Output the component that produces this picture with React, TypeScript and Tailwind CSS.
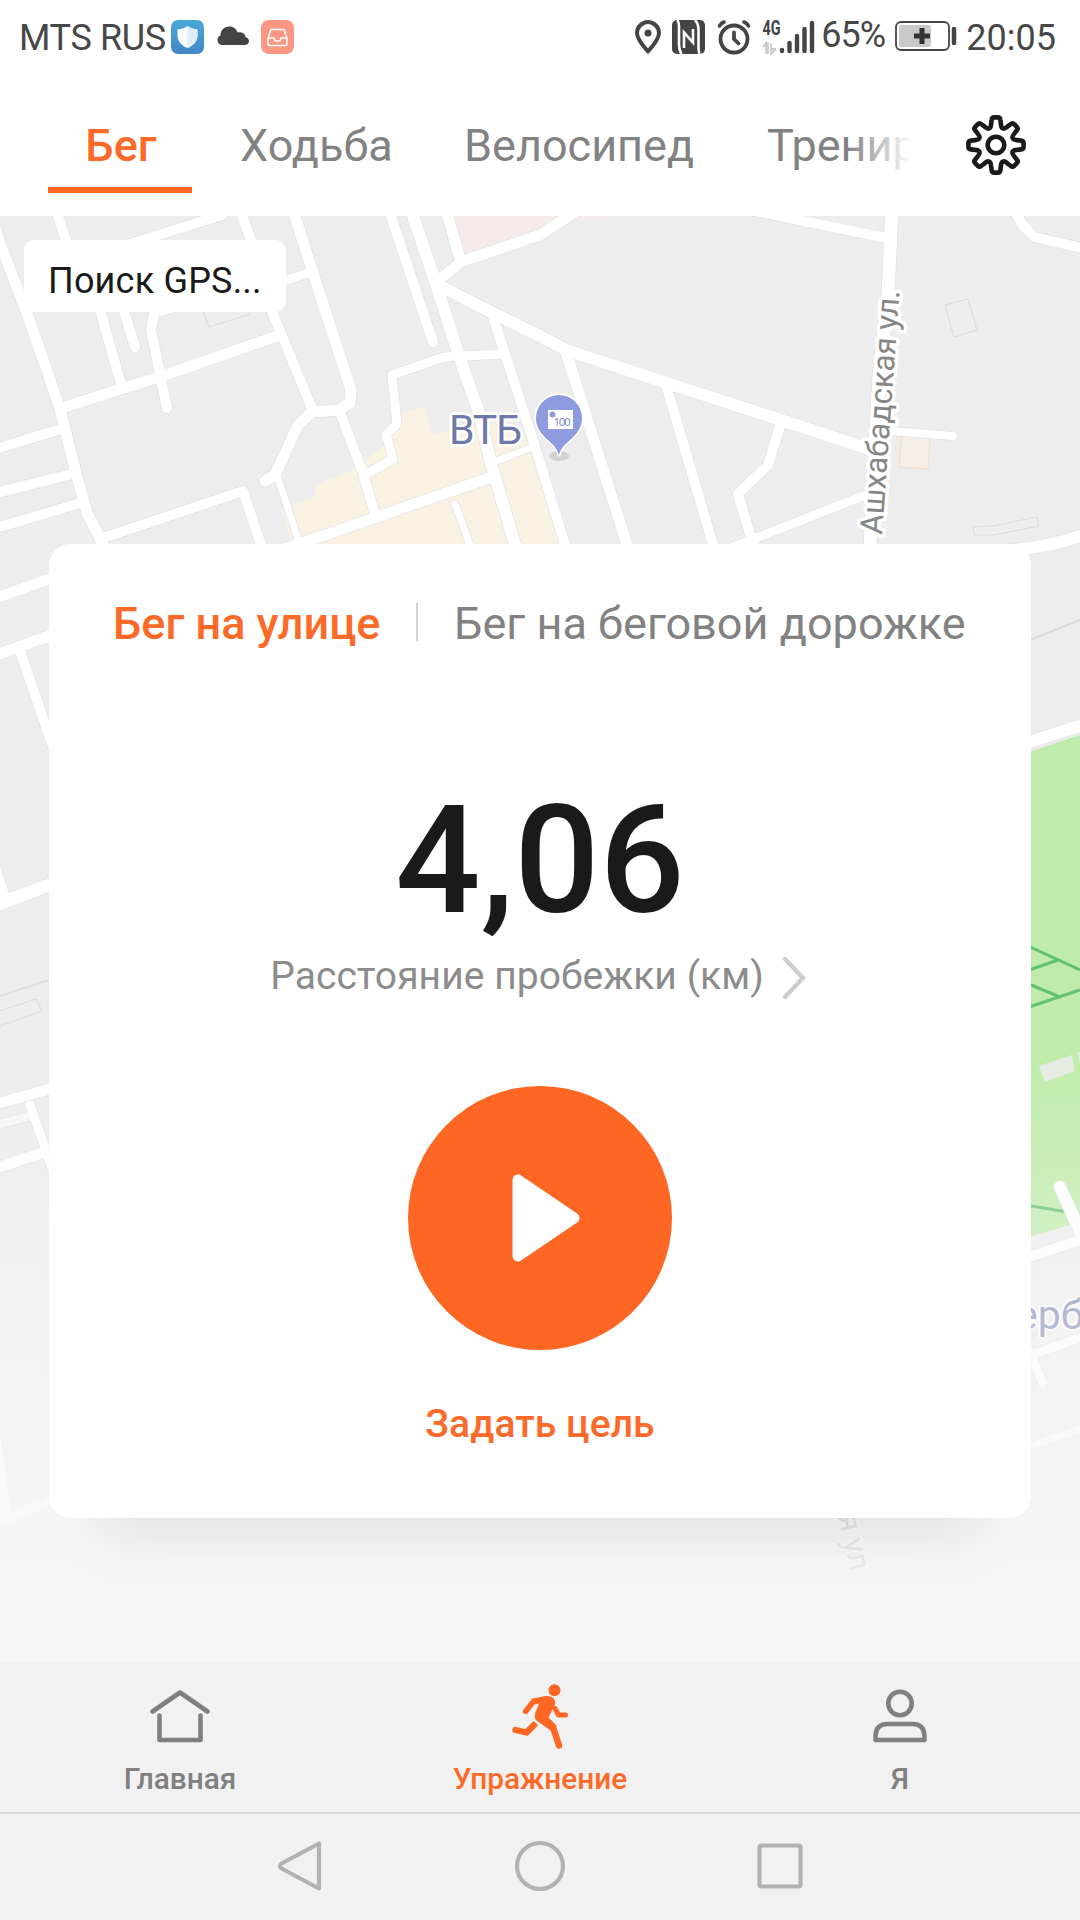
import { useState } from "react";

type Road = { d: string; w: number; color?: string };

const ROADS: Road[] = [
  { d: "M-10 212L0 243L28 316L60 409L76 473L87 513L105 548", w: 11 },
  { d: "M56 210L75 268L100 310L121 384", w: 10 },
  { d: "M108 270L124 311L135 347", w: 10 },
  { d: "M130 244L222 215", w: 10 },
  { d: "M240 210L251 240L272 312L281 333L312 409", w: 10 },
  { d: "M293 210L313 273L351 390L350 403L339 410L312 412L298 425L275 475L265 481", w: 11 },
  { d: "M284 281L311 272", w: 9 },
  { d: "M62 408L127 387L165 375L277 336", w: 11 },
  { d: "M180 305L154 313L151 330L167 408", w: 10 },
  { d: "M339 410L363 473L376 518", w: 10 },
  { d: "M365 475L393 459L386 435L397 424L392 375L444 357L505 354", w: 9 },
  { d: "M389 210L433 342", w: 10 },
  { d: "M411 210L437 287L458 353L478 410L492 467L516 548", w: 12 },
  { d: "M446 210L460 259", w: 11 },
  { d: "M437 281L463 261L540 235L578 210", w: 11 },
  { d: "M440 286L495 314L540 336L566 350L667 383L781 420L872 450", w: 12 },
  { d: "M494 320L534 443L566 548", w: 10 },
  { d: "M-4 449L64 428", w: 10 },
  { d: "M-4 493L76 473", w: 10 },
  { d: "M-4 528L84 502", w: 10 },
  { d: "M103 538L243 491L262 548", w: 10 },
  { d: "M277 475L301 548", w: 7 },
  { d: "M285 549L489 478", w: 11 },
  { d: "M494 462L530 448", w: 7 },
  { d: "M455 504L472 550", w: 7 },
  { d: "M566 352L628 548", w: 11 },
  { d: "M666 385L714 548", w: 10 },
  { d: "M781 423L768 465L738 494L754 548", w: 10 },
  { d: "M728 549L871 493", w: 9 },
  { d: "M892 210L888 293L879 377L870 548", w: 13 },
  { d: "M755 211L886 238", w: 10 },
  { d: "M892 431L953 436", w: 8 },
  { d: "M1014 210L1022 224L1034 237L1086 249", w: 10 },
  { d: "M1000 551Q1050 548 1086 534", w: 12 },
  { d: "M-4 598L60 575", w: 11 },
  { d: "M-4 655L60 632", w: 11 },
  { d: "M19 648L54 750", w: 10 },
  { d: "M-6 864L5 897", w: 10 },
  { d: "M-4 905L60 881", w: 13 },
  { d: "M-4 1104L60 1086", w: 11 },
  { d: "M-4 1125L30 1116", w: 9, color: "#f7f7f7" },
  { d: "M-4 1168L60 1147", w: 11 },
  { d: "M30 1105L52 1168", w: 9 },
  { d: "M1026 743L1086 724", w: 12 },
  { d: "M1026 1258L1086 1238", w: 10 },
  { d: "M1060 1187L1084 1240", w: 12 },
  { d: "M1026 1357L1086 1336", w: 9 },
  { d: "M1030 1352L1043 1384", w: 9 },
  { d: "M1026 1448L1086 1427", w: 8 },
  { d: "M-4 1440L6 1510L-4 1524L60 1496", w: 10 },
];

// one gear tooth plus the valley to its right, repeated every 45 degrees
function gearPath() {
  const rot = (x: number, y: number, a: number) => {
    const s = Math.sin(a);
    const c = Math.cos(a);
    return `${(30 + x * c - y * s).toFixed(2)} ${(30 + x * s + y * c).toFixed(2)}`;
  };
  let d = "";
  for (let i = 0; i < 8; i++) {
    const a = (i * Math.PI) / 4;
    const p = (x: number, y: number) => rot(x, y, a);
    d += `${i === 0 ? "M" : "L"}${p(-4.9, -21)}L${p(-4.4, -25)}Q${p(-4.2, -27.6)} ${p(-1.8, -27.6)}`;
    d += `L${p(1.8, -27.6)}Q${p(4.2, -27.6)} ${p(4.4, -25)}L${p(4.9, -21)}`;
    d += `C${p(5.3, -16)} ${p(7.57, -15.06)} ${p(11.38, -18.31)}`;
  }
  return d + "Z";
}

const GEAR = gearPath();

function MapView() {
  return (
    <svg className="absolute inset-0 h-full w-full" viewBox="0 216 1080 1446" aria-hidden="true">
      <defs>
        <linearGradient id="fade" x1="0" y1="0" x2="0" y2="1">
          <stop offset="0.58" stopColor="#f7f7f7" stopOpacity="0" />
          <stop offset="0.93" stopColor="#f7f7f7" stopOpacity="0.9" />
          <stop offset="1" stopColor="#f7f7f7" />
        </linearGradient>
      </defs>
      <rect y="216" width="1080" height="1446" fill="#ededed" />

      <path d="M455 216H619L565 222L463 252Z" fill="#f7eaea" />
      <path
        d="M283 510L296 503L315 497V485L353 470L390 440L401 413L424 407L433 435L458 427L492 424L530 432L566 548H293Z"
        fill="#f9f2e3"
      />
      <path d="M902 433L930 435L928 469L899 467Z" fill="#f4efea" stroke="#f3dfc8" />
      <g fill="none" stroke="#dadada">
        <path d="M945 305L968 299L977 330L954 337Z" />
        <path d="M973 527L993 526L1037 517L1039 526L994 535H974Z" />
        <path d="M0 1011L36 999L42 1011L0 1026" />
        <path d="M202 308L209 327L250 314" />
      </g>
      <path d="M0 996L49 980" stroke="#dedede" strokeWidth="2" />
      <path d="M1030 640L1080 620" stroke="#d5dadb" strokeWidth="2" />

      <path d="M1026 753L1080 735V1222L1026 1238Z" fill="#bfecaa" />
      <g fill="none" stroke="#63c074" strokeWidth="3">
        <path d="M1026 945L1080 970M1026 971L1058 960M1026 983L1058 996M1026 1008L1080 990M1026 1205L1067 1212" />
      </g>
      <path d="M1039 1066L1072 1055L1075 1071L1045 1082ZM1077 1053L1080 1052V1062Z" fill="#e4ebe2" />

      <g fill="none" strokeLinecap="round" strokeLinejoin="round">
        {ROADS.map((r) => (
          <path key={r.d} d={r.d} stroke="#e1e1e1" strokeWidth={r.w + 1.4} />
        ))}
        {ROADS.map((r) => (
          <path key={r.d} d={r.d} stroke={r.color ?? "#fff"} strokeWidth={r.w} />
        ))}
      </g>

      <g className="font-['Roboto',sans-serif]" stroke="#fff" strokeLinejoin="round" paintOrder="stroke">
        <text x="449" y="444" fontSize="41" textLength="73" strokeWidth="5" fill="#6f79a8">
          ВТБ
        </text>
        <text
          transform="translate(882 535) rotate(-85.9)"
          fontSize="31.5"
          textLength="245"
          strokeWidth="7"
          fill="#868686"
        >
          Ашхабадская ул.
        </text>
        <text x="1016" y="1329" fontSize="41" strokeWidth="4" fill="#7c82b4">
          ерб
        </text>
        <text transform="translate(834 1500) rotate(77)" fontSize="31" strokeWidth="4" fill="#777">
          ая ул
        </text>
      </g>

      <ellipse cx="559" cy="456" rx="10" ry="5" fill="#d2d2d2" />
      <path
        d="M559 456C557 441 536 438 536 418A23 23 0 0 1 582 418C582 438 561 441 559 456Z"
        fill="#8f9bdf"
        stroke="#fff"
        strokeWidth="3"
        paintOrder="stroke"
      />
      <rect x="548" y="410" width="25" height="19" fill="#fff" />
      <circle cx="552.5" cy="414.5" r="3" fill="#8f9bdf" />
      <text x="553.5" y="426" fontSize="11.5" textLength="17" className="font-['Open_Sans',sans-serif]" fill="#6f7dcc">
        100
      </text>
      <rect y="216" width="1080" height="1446" fill="url(#fade)" />
    </svg>
  );
}

function StatusBar() {
  return (
    <div className="flex h-[74px] items-center pl-[19px] pr-[24px] text-[36px] leading-none text-[#474747]">
      <span className="w-[152px] whitespace-nowrap pt-[2px] tracking-[-0.35px]">MTS RUS</span>
      <svg width="33" height="34" viewBox="0 0 33 34">
        <defs>
          <linearGradient id="shield" x1="0" y1="0" x2="0" y2="1">
            <stop offset="0" stopColor="#4aa8da" />
            <stop offset="1" stopColor="#4286c4" />
          </linearGradient>
        </defs>
        <rect width="33" height="34" rx="7" fill="url(#shield)" />
        <path d="M16.500 6C19 8 22 9 26.500 9.500V15C26.500 21 23 25.500 16.500 28C10 25.500 6.500 21 6.500 15V9.500C11 9 14 8 16.500 6Z" fill="#fafdff" />
        <path d="M16.500 6C19 8 22 9 26.500 9.500V15C26.500 21 23 25.500 16.500 28Z" fill="#dfecf7" />
      </svg>
      <svg className="ml-3" width="33" height="34" viewBox="0 0 33 34">
        <path d="M5.500 25A5 5 0 0 1 4.500 15.500C4.500 10 8 6.500 13.500 6.500C17.500 6.500 20.500 9 21.500 12.500C26 11.500 29.500 14 29.500 17C32 17.500 33 19.500 33 21C33 23.500 31 25 28.500 25Z" fill="#444" />
      </svg>
      <svg className="ml-3" width="33" height="34" viewBox="0 0 33 34">
        <rect width="33" height="34" rx="8" fill="#fd9682" />
        <g fill="none" stroke="#fff" strokeWidth="1.500" strokeLinejoin="round">
          <path d="M10 9.500H23L26 18V23.500Q26 25.500 24 25.500H9Q7 25.500 7 23.500V18Z" />
          <path d="M7.500 18H13L14 21H19L20 18H25.500" />
        </g>
      </svg>

      <svg className="ml-auto" width="28" height="36" viewBox="0 0 28 36">
        <path d="M14 32.500C10 27.500 3 21 3 14A11 11 0 0 1 25 14C25 21 18 27.500 14 32.500Z" fill="none" stroke="#444" strokeWidth="4" strokeLinejoin="round" />
        <circle cx="14" cy="14" r="3.500" fill="#444" />
      </svg>
      <svg className="ml-[10px]" width="33" height="34" viewBox="0 0 33 34">
        <rect width="33" height="34" rx="5" fill="#444" />
        <g fill="none" stroke="#fff">
          <path d="M5 0C7.500 2 7 6 7 9V24C7 28 7.500 31 9.500 34" strokeWidth="2.600" />
          <path d="M23 0C26 3 26.500 6 26.500 10V25C26.500 29 26.500 32 27.500 34" strokeWidth="2.600" />
          <path d="M12 28V12.500L21 22.500V9" strokeWidth="2.600" />
        </g>
      </svg>
      <svg className="ml-3" width="34" height="36" viewBox="0 0 34 36">
        <g fill="none" stroke="#444" strokeLinecap="round">
          <circle cx="17" cy="20" r="13.500" strokeWidth="3.800" />
          <path d="M17 13.500V20L21.500 24.500" strokeWidth="3.800" />
          <path d="M2.500 7Q4 4 7 3M31.500 7Q30 4 27 3" strokeWidth="3.600" />
        </g>
      </svg>
      <svg className="ml-[9px] overflow-visible" width="56" height="38" viewBox="-2 -1 56 38">
        <text x="0.500" y="16" fontSize="20" fontWeight="700" textLength="18" lengthAdjust="spacingAndGlyphs" fill="#444">
          4G
        </text>
        <path d="M1 28L4 24V35M4 24H6V35M9 24V35L14 30M9 30H14" fill="none" stroke="#c9c9c9" strokeWidth="1.800" />
        <g stroke="#444" strokeWidth="4.400" strokeLinecap="round">
          <path d="M20 31V32M27.500 24V32M35 17V32M42.500 10V32M50 4V32" />
        </g>
      </svg>
      <span className="ml-[5px] w-[68px] whitespace-nowrap pb-1 tracking-[-1px]">65%</span>
      <svg className="ml-[6px]" width="62" height="34" viewBox="0 0 62 34">
        <rect x="1" y="2" width="53" height="28" rx="5" fill="none" stroke="#444" strokeWidth="1.800" />
        <rect x="4" y="5" width="32" height="22" rx="2" fill="#c9c9c9" />
        <path d="M27 8V24M19 16H35" stroke="#333" strokeWidth="5" strokeLinejoin="round" />
        <path d="M59 9V23" stroke="#444" strokeWidth="4.500" strokeLinecap="round" />
      </svg>
      <span className="ml-[9px] whitespace-nowrap pt-[2px]">20:05</span>
    </div>
  );
}

const TABS = [
  { id: "run", label: "Бег", box: "w-[144px] pl-[2px]" },
  { id: "walk", label: "Ходьба", box: "ml-[48px] w-[152px]" },
  { id: "bike", label: "Велосипед", box: "ml-[72px] w-[232px]" },
  { id: "training", label: "Тренировка", box: "ml-[71px] w-[220px]" },
];

function Header({ tab, onTab }: { tab: string; onTab: (id: string) => void }) {
  return (
    <header className="flex h-[142px] items-center bg-white">
      <div className="relative ml-12 flex h-full w-[864px] overflow-hidden text-[45px]">
        {TABS.map((t) => (
          <button
            key={t.id}
            onClick={() => onTab(t.id)}
            className={`relative h-full shrink-0 whitespace-nowrap pt-[2px] ${t.box} ${
              tab === t.id ? "text-center font-medium text-[#fb6a28]" : "text-left text-[#828282]"
            }`}
          >
            {t.label}
            {tab === t.id && <span className="absolute bottom-[23px] left-0 h-[6px] w-full bg-[#fb6522]" />}
          </button>
        ))}
        <div className="absolute right-0 top-0 h-full w-[64px] bg-linear-to-r from-white/0 to-white" />
      </div>
      <svg className="ml-[54px]" width="60" height="60" viewBox="0 0 60 60">
        <g fill="none" stroke="#1a1a1a" strokeWidth="4.600" strokeLinejoin="round">
          <path d={GEAR} />
          <circle cx="30" cy="30" r="8.300" />
        </g>
      </svg>
    </header>
  );
}

function WorkoutCard() {
  return (
    <div className="relative mx-[49px] mt-[328px] flex h-[974px] flex-col items-center rounded-[22px] bg-white pt-12 shadow-[0_64px_60px_-50px_rgba(0,0,0,0.09)]">
      <div className="flex h-16 w-full items-center whitespace-nowrap text-[45px]">
        <button className="ml-16 w-[268px] text-left font-medium text-[#fb6a28]">Бег на улице</button>
        <span className="mb-1 ml-[35px] h-[38px] w-[2px] bg-[#d0d0d0]" />
        <button className="ml-[36px] text-left tracking-[0.03px] text-[#828282]">Бег на беговой дорожке</button>
      </div>

      <div className="mt-[130px] text-[150px] font-medium leading-[151px] text-[#1a1a1a]">4,06</div>

      <div className="mt-[15px] flex h-12 items-center gap-[17px] whitespace-nowrap pr-[3px] text-[39px] tracking-[0.05px] text-[#8c8c8c]">
        Расстояние пробежки (км)
        <svg className="mt-1" width="26" height="44" viewBox="0 0 26 44">
          <path d="M4 3L22 22L4 41" fill="none" stroke="#ccc" strokeWidth="4.200" strokeLinecap="round" />
        </svg>
      </div>

      <button className="mt-[86px] flex size-[264px] items-center justify-center rounded-full bg-[#fe6624]">
        <svg className="ml-[11px]" width="68" height="88" viewBox="0 0 68 88">
          <path d="M6 6V82L62 44Z" fill="#fff" stroke="#fff" strokeWidth="11" strokeLinejoin="round" />
        </svg>
      </button>

      <button className="mt-[50px] h-12 text-[39px] font-medium leading-[48px] tracking-[0.1px] text-[#fb6a28]">
        Задать цель
      </button>
    </div>
  );
}

function BottomNav() {
  return (
    <nav className="grid h-[150px] grid-cols-3 bg-[#f1f1f1] text-[29.800px] font-medium leading-[36px] text-[#808080]">
      <button className="flex flex-col items-center pt-[18px]">
        <svg width="72" height="72" viewBox="0 0 72 72">
          <g fill="none" stroke="#808080" strokeWidth="4.600" strokeLinecap="round" strokeLinejoin="round">
            <path d="M8.500 31.500L36 12.500L63.500 31.500" />
            <path d="M15.500 35.500V60H56.500V35.500" />
          </g>
        </svg>
        <span className="mt-[9px]">Главная</span>
      </button>
      <button className="flex flex-col items-center pt-[18px] text-[#fb6a28]">
        <svg width="72" height="72" viewBox="0 0 72 72">
          <g transform="translate(0.500 0.500)">
            <circle cx="50" cy="9.700" r="6" fill="#fe6624" />
            <g fill="none" stroke="#fe6624" strokeLinecap="round" strokeLinejoin="round">
              <path d="M40 19L28.500 21.500L21 31" strokeWidth="5.400" />
              <path d="M50.500 28L54 34.500H61" strokeWidth="5" />
              <path d="M11 49.500L22 52L30 44" strokeWidth="6.400" />
              <path d="M39 39L49 48L54.500 65" strokeWidth="6.400" />
            </g>
            <path d="M26 18.500L41 15.500C49 15 52 20 50 25L44 37L52.500 45.500L46 50L32 40C29.500 37.500 30 35 31 32L35 22Z" fill="#fe6624" />
            <path d="M27.500 38L38.500 47.500" stroke="#f1f1f1" strokeWidth="1.800" />
          </g>
        </svg>
        <span className="mt-[9px]">Упражнение</span>
      </button>
      <button className="flex flex-col items-center pt-[18px]">
        <svg width="72" height="72" viewBox="0 0 72 72">
          <g fill="none" stroke="#808080" strokeWidth="4.600" strokeLinejoin="round">
            <circle cx="36" cy="23.500" r="11.700" />
            <path d="M11.500 60V55.500Q12 44 24 44H48Q60 44 60.500 55.500V60Z" />
          </g>
        </svg>
        <span className="mt-[9px]">Я</span>
      </button>
    </nav>
  );
}

function SystemBar() {
  return (
    <div className="flex h-[108px] items-center justify-center gap-[180px] border-t-2 border-[#d9d9d9] bg-[#f1f1f1] pb-[2px]">
      <svg width="60" height="60" viewBox="0 0 60 60">
        <path d="M49 7.500V52.500L11.500 32.500Q8.500 30 11.500 27.500Z" fill="none" stroke="#b2b2b2" strokeWidth="4.200" strokeLinejoin="round" />
      </svg>
      <svg width="60" height="60" viewBox="0 0 60 60">
        <circle cx="30" cy="30" r="23" fill="none" stroke="#b2b2b2" strokeWidth="4.200" />
      </svg>
      <svg width="60" height="60" viewBox="0 0 60 60">
        <rect x="9.500" y="9.500" width="41" height="41" rx="1.500" fill="none" stroke="#b2b2b2" strokeWidth="4.200" />
      </svg>
    </div>
  );
}

export default function App() {
  const [tab, setTab] = useState("run");

  return (
    <div className="flex h-[1920px] w-[1080px] flex-col overflow-hidden bg-white font-['Roboto',sans-serif]">
      <StatusBar />
      <Header tab={tab} onTab={setTab} />
      <main className="relative flex h-[1446px] flex-col overflow-hidden">
        <MapView />
        <div className="absolute left-6 top-6 flex h-[72px] w-[262px] items-center whitespace-nowrap rounded-[11px] bg-white pl-6 pt-[10px] text-[36px] tracking-[0.2px] text-[#1a1a1a]">
          Поиск GPS...
        </div>
        <WorkoutCard />
      </main>
      <BottomNav />
      <SystemBar />
    </div>
  );
}
